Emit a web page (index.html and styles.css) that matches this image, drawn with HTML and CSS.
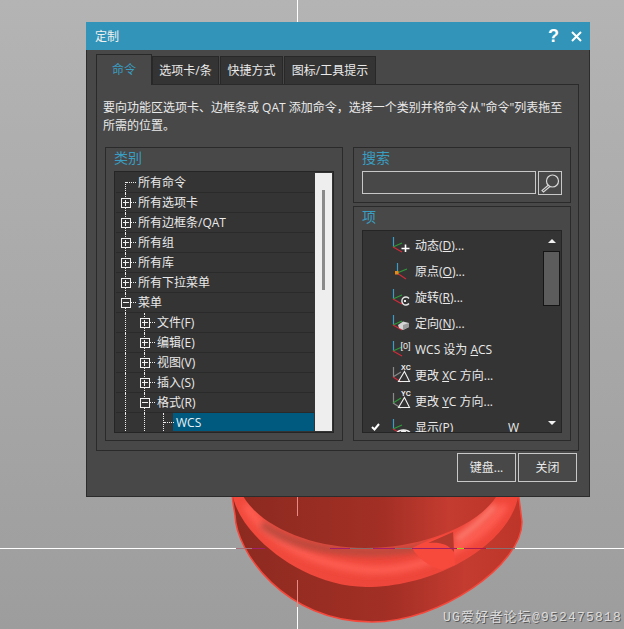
FILE: index.html
```html
<!DOCTYPE html>
<html lang="zh-CN">
<head>
    <meta charset="UTF-8">
    <title>定制</title>
    <link rel="stylesheet" href="styles.css">
</head>
<body>
    <!-- 3D viewport behind the dialog -->
    <svg class="viewport" width="624" height="629" viewBox="0 0 624 629">
        <defs>
            <linearGradient id="bg" x1="0" y1="0" x2="0" y2="1">
                <stop offset="0" stop-color="#b4b4b4"/>
                <stop offset="1" stop-color="#9d9d9d"/>
            </linearGradient>
            <linearGradient id="wall" x1="0" y1="0" x2="1" y2="0">
                <stop offset="0" stop-color="#8c2a20"/>
                <stop offset="0.55" stop-color="#a32f25"/>
                <stop offset="0.8" stop-color="#c43b30"/>
                <stop offset="1" stop-color="#bd3428"/>
            </linearGradient>
            <linearGradient id="rim" x1="0" y1="0" x2="1" y2="0">
                <stop offset="0" stop-color="#f24a3d"/>
                <stop offset="0.55" stop-color="#ee463a"/>
                <stop offset="1" stop-color="#f0463a"/>
            </linearGradient>
            <filter id="soft" x="-20%" y="-50%" width="140%" height="200%">
                <feGaussianBlur stdDeviation="3"/>
            </filter>
            <clipPath id="rim-clip">
                <path d="M232 490 C234 530 300 587 366 587 C440 587 516 540 519 490 Z"/>
            </clipPath>
        </defs>
        <rect width="624" height="629" fill="url(#bg)"/>
        <rect x="297" y="0" width="1" height="629" fill="#fff"/>
        <rect x="0" y="548" width="624" height="1" fill="#fff"/>
        <path d="M235 515 C236 552 285 622 372 622 C440 622 522 565 522 522 L518 490 L232 490 C232 500 234 508 235 515 Z" fill="url(#wall)" stroke="#f5483c" stroke-width="1.5"/>
        <path d="M232 490 C234 530 300 587 366 587 C440 587 516 540 519 490 Z" fill="url(#rim)"/>
        <g clip-path="url(#rim-clip)">
            <path d="M246 505 C270 545 320 566 370 570 C420 572 480 545 505 505" fill="none" stroke="#ff5f53" stroke-width="8" filter="url(#soft)"/>
            <path d="M262 524 C290 545 330 552 370 552 C395 552 415 549 430 545" fill="none" stroke="#b84a3e" stroke-width="8" filter="url(#soft)"/>
            <path d="M456 540 C470 530 485 518 495 505" fill="none" stroke="#ff8478" stroke-width="6" filter="url(#soft)"/>
        </g>
        <path d="M240 490 C255 525 310 548 365 548 C425 548 484 524 500 490 Z" fill="url(#wall)"/>
        <path d="M412 548 C426 541 440 536 453 532 L455 565 L442 570 C428 566 418 558 412 548 Z" fill="#f8493d"/>
        <path d="M428 543 L453 532 L454 552 C448 544 440 542 428 543 Z" fill="#b5392d"/>
        <rect x="297" y="496" width="1" height="20" fill="#e88a84"/>
        <rect x="297" y="580" width="1" height="27" fill="#e88a84"/>
        <rect x="236" y="548" width="16" height="1" fill="#a8707a"/>
        <rect x="252" y="548" width="13" height="1" fill="#a0206a"/>
        <rect x="330" y="548" width="20" height="1" fill="#a0206a"/>
        <rect x="350" y="548" width="23" height="1" fill="#8a6a6a"/>
        <rect x="373" y="548" width="22" height="1" fill="#a0206a"/>
        <rect x="395" y="548" width="17" height="1" fill="#8a6a6a"/>
        <rect x="412" y="548" width="45" height="1" fill="#a0206a"/>
        <rect x="457" y="548" width="7" height="1" fill="#a8d020"/>
        <rect x="464" y="548" width="22" height="1" fill="#a81c50"/>
        <rect x="486" y="548" width="29" height="1" fill="#8a7070"/>
    </svg>
    <div class="watermark">UG爱好者论坛@952475818</div>

    <div class="dialog">
        <div class="titlebar">
            <span class="title">定制</span>
            <span class="help">?</span>
            <svg class="close" width="11" height="11" viewBox="0 0 11 11"><path d="M1 1 L10 10 M10 1 L1 10" stroke="#fff" stroke-width="2" fill="none"/></svg>
        </div>

        <div class="tabs">
            <div class="tab active">命令</div>
            <div class="tab t2">选项卡/条</div>
            <div class="tab t3">快捷方式</div>
            <div class="tab t4">图标/工具提示</div>
        </div>

        <div class="pane">
            <p class="desc">要向功能区选项卡、边框条或 QAT 添加命令，选择一个类别并将命令从"命令"列表拖至所需的位置。</p>

            <div class="columns">
                <div class="group">
                    <div class="group-label">类别</div>
                    <div class="tree-box">
                        <div class="tree">
                            <div class="row"><span class="cell first"></span><span class="name">所有命令</span></div>
                            <div class="row"><span class="cell node"><i class="box plus"></i></span><span class="name">所有选项卡</span></div>
                            <div class="row"><span class="cell node"><i class="box plus"></i></span><span class="name">所有边框条/QAT</span></div>
                            <div class="row"><span class="cell node"><i class="box plus"></i></span><span class="name">所有组</span></div>
                            <div class="row"><span class="cell node"><i class="box plus"></i></span><span class="name">所有库</span></div>
                            <div class="row"><span class="cell node"><i class="box plus"></i></span><span class="name">所有下拉菜单</span></div>
                            <div class="row"><span class="cell node"><i class="box minus"></i></span><span class="name">菜单</span></div>
                            <div class="row"><span class="cell line"></span><span class="cell node"><i class="box plus"></i></span><span class="name">文件(F)</span></div>
                            <div class="row"><span class="cell line"></span><span class="cell node"><i class="box plus"></i></span><span class="name">编辑(E)</span></div>
                            <div class="row"><span class="cell line"></span><span class="cell node"><i class="box plus"></i></span><span class="name">视图(V)</span></div>
                            <div class="row"><span class="cell line"></span><span class="cell node"><i class="box plus"></i></span><span class="name">插入(S)</span></div>
                            <div class="row"><span class="cell line"></span><span class="cell node"><i class="box minus"></i></span><span class="name">格式(R)</span></div>
                            <div class="row"><span class="cell line"></span><span class="cell line"></span><span class="cell node"></span><span class="name selected">WCS</span></div>
                        </div>
                        <div class="tree-scroll"><div class="tree-thumb"></div></div>
                    </div>
                </div>

                <div class="right">
                    <div class="group search-group">
                        <div class="group-label">搜索</div>
                        <div class="search">
                            <div class="search-input"></div>
                            <div class="search-btn">
                                <svg width="22" height="22" viewBox="0 0 22 22"><circle cx="13.5" cy="9" r="6" fill="none" stroke="#d8d8d8" stroke-width="1.2"/><path d="M9.5 13 L3 18.5 L4.5 20 L11 14.5" fill="none" stroke="#d8d8d8" stroke-width="1.1"/></svg>
                            </div>
                        </div>
                    </div>

                    <div class="group items-group">
                        <div class="group-label">项</div>
                        <div class="items-box">
                            <div class="items">
                                <div class="item">
                                    <span class="check"></span>
                                    <svg class="icon" width="22" height="22" viewBox="0 0 22 22"><use href="#triad"/><path d="M14.5 10.5 V18 M10.5 14.5 H18.5" stroke="#fff" stroke-width="1.6"/></svg>
                                    <span class="label">动态(<u>D</u>)...</span>
                                </div>
                                <div class="item">
                                    <span class="check"></span>
                                    <svg class="icon" width="22" height="22" viewBox="0 0 22 22"><path d="M6.5 3 V13" stroke="#3a9cc8" stroke-width="1.2"/><path d="M6 13 L16 9" stroke="#2e9a3a" stroke-width="1.2"/><path d="M6 13 L15 19" stroke="#d02a3a" stroke-width="1.2"/><rect x="4" y="11" width="3.5" height="3.5" fill="#e88a1a"/></svg>
                                    <span class="label">原点(<u>O</u>)...</span>
                                </div>
                                <div class="item">
                                    <span class="check"></span>
                                    <svg class="icon" width="22" height="22" viewBox="0 0 22 22"><use href="#triad"/><path d="M18 12.5 A4 4 0 1 0 18 17.5" fill="none" stroke="#e8e8e8" stroke-width="1.4"/><rect x="13" y="14" width="2" height="2" fill="#e8e8e8"/></svg>
                                    <span class="label">旋转(<u>R</u>)...</span>
                                </div>
                                <div class="item">
                                    <span class="check"></span>
                                    <svg class="icon" width="22" height="22" viewBox="0 0 22 22"><use href="#triad"/><path d="M7 13 L12 9.5 L18 11 V15 L12 18 L8 16 Z" fill="#d4d4d4"/><path d="M12 13 L18 11 V15 L12 18 Z" fill="#9a9a9a"/></svg>
                                    <span class="label">定向(<u>N</u>)...</span>
                                </div>
                                <div class="item">
                                    <span class="check"></span>
                                    <svg class="icon" width="22" height="22" viewBox="0 0 22 22"><use href="#triad"/><text x="9.5" y="11" class="icon-text big">[0]</text></svg>
                                    <span class="label">WCS 设为 <u>A</u>CS</span>
                                </div>
                                <div class="item">
                                    <span class="check"></span>
                                    <svg class="icon" width="22" height="22" viewBox="0 0 22 22"><path d="M2.5 3 V13 M2 13 L10 8" stroke="#8a8a8a" stroke-width="1.2"/><path d="M2 13 L10 18" stroke="#d02a3a" stroke-width="1.2"/><path d="M13.5 7.5 L18.5 17.5 H7.5 Z" fill="none" stroke="#f0f0f0" stroke-width="1.1"/><text x="10" y="6" class="icon-text">XC</text></svg>
                                    <span class="label">更改 <u>X</u>C 方向...</span>
                                </div>
                                <div class="item">
                                    <span class="check"></span>
                                    <svg class="icon" width="22" height="22" viewBox="0 0 22 22"><path d="M2.5 3 V13" stroke="#8a8a8a" stroke-width="1.2"/><path d="M2 13 L10 8" stroke="#2e9a3a" stroke-width="1.2"/><path d="M2 13 L10 18" stroke="#8a8a8a" stroke-width="1.2"/><path d="M13.5 7.5 L18.5 17.5 H7.5 Z" fill="none" stroke="#f0f0f0" stroke-width="1.1"/><text x="10" y="6" class="icon-text">YC</text></svg>
                                    <span class="label">更改 <u>Y</u>C 方向...</span>
                                </div>
                                <div class="item">
                                    <span class="check">
                                        <svg width="9" height="8" viewBox="0 0 9 8"><path d="M1 4 L3.5 6.5 L8 1" fill="none" stroke="#fff" stroke-width="2"/></svg>
                                    </span>
                                    <svg class="icon" width="22" height="22" viewBox="0 0 22 22"><use href="#triad"/><path d="M5 18 A8 6 0 0 1 20 18" fill="none" stroke="#f0f0f0" stroke-width="1.5"/><circle cx="12.5" cy="17" r="3" fill="#f0f0f0"/></svg>
                                    <span class="label">显示(<u>P</u>)</span>
                                    <span class="key">W</span>
                                </div>
                            </div>
                            <div class="items-scroll">
                                <i class="arrow up"></i>
                                <div class="items-thumb"></div>
                                <i class="arrow down"></i>
                            </div>
                        </div>
                    </div>
                </div>
            </div>
        </div>

        <div class="footer">
            <div class="btn">键盘...</div>
            <div class="btn">关闭</div>
        </div>
    </div>

    <svg class="defs" width="0" height="0">
        <symbol id="triad" viewBox="0 0 22 22">
            <path d="M2.5 3 V13" stroke="#3a9cc8" stroke-width="1.2"/>
            <path d="M2 13 L11 9" stroke="#2e9a3a" stroke-width="1.2"/>
            <path d="M2 13 L11 18" stroke="#d02a3a" stroke-width="1.2"/>
        </symbol>
    </svg>
</body>
</html>
```

FILE: styles.css
```css
* {
    box-sizing: border-box;
}
body {
    margin: 0;
    width: 624px;
    height: 629px;
    overflow: hidden;
    position: relative;
    font-family: "Open Sans", "Noto Sans CJK SC", sans-serif;
    font-size: 12px;
    color: #eaeaea;
}
.viewport {
    position: absolute;
    left: 0;
    top: 0;
}
.defs {
    position: absolute;
}
.watermark {
    position: absolute;
    left: 443px;
    top: 609px;
    font-family: "Liberation Mono", "Noto Sans CJK SC", monospace;
    font-size: 13px;
    line-height: 18px;
    letter-spacing: 1.2px;
    white-space: nowrap;
    color: #dcdcdc;
    text-shadow: 1px 1px 0 #5a5a5a;
}

/* dialog */
.dialog {
    position: absolute;
    left: 86px;
    top: 22px;
    width: 504px;
    height: 475px;
    background: #484848;
    border: 1px solid #2c2c2c;
    border-top: 0;
    display: flex;
    flex-direction: column;
}
.titlebar {
    height: 28px;
    margin: 0 -1px;
    background: #3194b8;
    display: flex;
    align-items: center;
    padding: 0 8px 0 9px;
    flex-shrink: 0;
}
.title {
    flex: 1;
    color: #f0f0f0;
}
.help {
    font-family: "Liberation Sans", sans-serif;
    font-weight: bold;
    font-size: 18px;
    color: #fff;
    margin-right: 12px;
}

/* tabs */
.tabs {
    display: flex;
    align-items: flex-end;
    height: 30px;
    margin: 4px 0 0 9px;
    flex-shrink: 0;
    position: relative;
    z-index: 1;
}
.tab {
    height: 28px;
    line-height: 27px;
    text-align: center;
    background: #343434;
    border: 1px solid #282828;
    border-bottom: 0;
    margin-right: 1px;
}
.tab.active {
    width: 56px;
    height: 31px;
    line-height: 30px;
    margin-right: 0;
    margin-bottom: -1px;
    background: #484848;
    color: #3a9ec2;
}
.t2 {
    width: 67px;
}
.t3 {
    width: 63px;
}
.t4 {
    width: 92px;
}

.pane {
    margin: 0 10px 0 9px;
    height: 367px;
    border: 1px solid #2a2a2a;
    padding: 14px 8px 0 8px;
    flex-shrink: 0;
}
.desc {
    margin: 0 0 0 -2px;
    line-height: 18px;
    height: 36px;
    width: 468px;
}
.columns {
    display: grid;
    grid-template-columns: 238px 218px;
    gap: 10px;
    margin-top: 12px;
}

/* group boxes */
.group {
    border: 1px solid #2a2a2a;
    padding: 0 8px;
}
.group-label {
    height: 23px;
    line-height: 19px;
    font-size: 14px;
    color: #3a9ec2;
}
.group > .tree-box {
    height: 262px;
}
.right {
    display: flex;
    flex-direction: column;
    gap: 3px;
}

/* tree */
.tree-box {
    width: 220px;
    border: 1px solid #252525;
    background: #343434;
    display: flex;
    padding: 1px;
}
.tree {
    width: 200px;
    overflow: hidden;
}
.row {
    display: flex;
    height: 20px;
    border-bottom: 1px solid #2a2a2a;
    white-space: nowrap;
}
.cell {
    width: 19px;
    flex-shrink: 0;
    position: relative;
}
.cell::before {
    content: "";
    position: absolute;
    left: 9px;
    top: 0;
    bottom: -1px;
    border-left: 1px dotted #eee;
}
.cell::after {
    content: "";
    position: absolute;
    left: 10px;
    top: 9px;
    width: 10px;
    border-top: 1px dotted #eee;
}
.cell.line::after {
    display: none;
}
.cell.first::before {
    top: 9px;
}
.box {
    position: absolute;
    left: 5px;
    top: 5px;
    width: 10px;
    height: 10px;
    border: 1px solid #f2f2f2;
    background: #343434;
    z-index: 1;
}
.box::before {
    content: "";
    position: absolute;
    left: 1px;
    top: 3px;
    width: 6px;
    height: 2px;
    border-top: 1px solid #f2f2f2;
}
.plus::after {
    content: "";
    position: absolute;
    left: 3px;
    top: 1px;
    width: 2px;
    height: 6px;
    border-left: 1px solid #f2f2f2;
}
.name {
    padding-left: 3px;
    line-height: 19px;
    flex: 1;
}
.name.selected {
    background: #005a80;
    color: #e8f2f6;
}
.tree-scroll {
    width: 17px;
    margin-left: 1px;
    background: #eeeeee;
    position: relative;
}
.tree-thumb {
    position: absolute;
    left: 7px;
    top: 17px;
    width: 3px;
    height: 100px;
    background: #8a8a8a;
}

/* search */
.search-group {
    height: 56px;
}
.search {
    display: flex;
    gap: 2px;
    width: 200px;
}
.search-input {
    width: 174px;
    height: 23px;
    border: 1px solid #c8c8c8;
}
.search-btn {
    width: 24px;
    height: 24px;
    border: 1px solid #c8c8c8;
}

/* items list */
.items-group {
    height: 235px;
}
.items-box {
    width: 200px;
    height: 203px;
    border: 1px solid #252525;
    background: #343434;
    display: flex;
}
.items {
    flex: 1;
    overflow: hidden;
    padding-top: 1px;
}
.item {
    display: flex;
    align-items: center;
    height: 26px;
    white-space: nowrap;
}
.check {
    width: 28px;
    padding-left: 8px;
    display: flex;
    flex-shrink: 0;
}
.icon {
    margin-right: 2px;
    flex-shrink: 0;
}
.icon-text {
    font-family: "Liberation Sans", sans-serif;
    font-size: 7px;
    font-weight: bold;
    fill: #f0f0f0;
}
.icon-text.big {
    font-size: 9px;
    font-weight: normal;
}
.label {
    flex: 1;
}
.key {
    width: 34px;
}
.items-scroll {
    width: 19px;
    display: flex;
    flex-direction: column;
    align-items: center;
    flex-shrink: 0;
    padding-top: 8px;
}
.arrow {
    width: 0;
    height: 0;
    border-left: 4px solid transparent;
    border-right: 4px solid transparent;
}
.arrow.up {
    border-bottom: 4px solid #f0f0f0;
}
.arrow.down {
    border-top: 4px solid #f0f0f0;
    margin-top: 115px;
}
.items-thumb {
    width: 17px;
    height: 55px;
    margin-top: 8px;
    background: #5c5c5c;
    border: 1px solid #151515;
}

/* footer */
.footer {
    display: flex;
    justify-content: flex-end;
    gap: 2px;
    padding: 2px 12px 0 0;
}
.btn {
    width: 59px;
    height: 29px;
    line-height: 27px;
    text-align: center;
    border: 1px solid #c8c8c8;
}
```
